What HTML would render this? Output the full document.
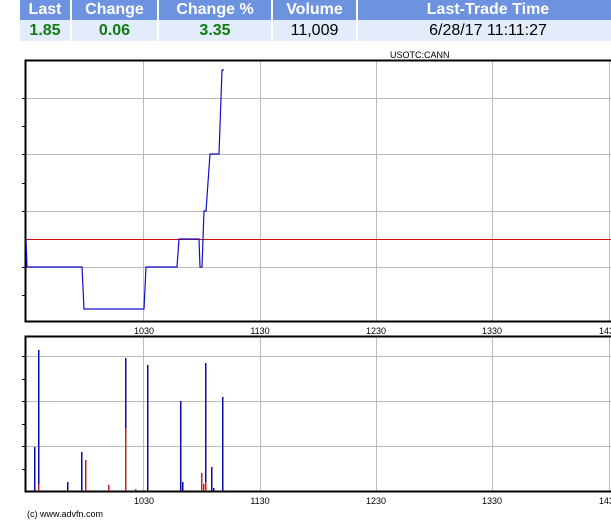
<!DOCTYPE html>
<html><head><style>
body{margin:0;width:611px;height:520px;background:#fff;overflow:hidden;font-family:"Liberation Sans",Arial,sans-serif;position:relative}
table{position:absolute;left:20px;top:0;border-collapse:collapse;width:600px}
th{background:#6c92e0;color:#fff;font-size:16px;height:20px;padding:0;border-right:2px solid #fff;font-weight:bold;line-height:20px}
td{background:#e2ecfb;height:21px;padding:0;text-align:center;font-size:16px;border-right:2px solid #fff;line-height:21px}
.g{color:#117a11;font-weight:bold}
svg{position:absolute;left:0;top:0}
</style></head><body>
<table><tr><th style="width:50px">Last</th><th style="width:85px">Change</th><th style="width:112px">Change %</th><th style="width:83px">Volume</th><th>Last-Trade Time</th></tr>
<tr><td class="g">1.85</td><td class="g">0.06</td><td class="g">3.35</td><td>11,009</td><td>6/28/17 11:11:27</td></tr></table>
<svg width="611" height="520" font-family="Liberation Sans,Arial,sans-serif" font-size="10">
<text x="390" y="58" font-size="9">USOTC:CANN</text>
<g stroke="#bbb" stroke-width="1">
<line x1="143.5" y1="61" x2="143.5" y2="321"/><line x1="260.5" y1="61" x2="260.5" y2="321"/><line x1="376.5" y1="61" x2="376.5" y2="321"/><line x1="492.5" y1="61" x2="492.5" y2="321"/><line x1="609.5" y1="61" x2="609.5" y2="321"/>
<line x1="26" y1="98.5" x2="611" y2="98.5"/><line x1="26" y1="154.5" x2="611" y2="154.5"/><line x1="26" y1="211.5" x2="611" y2="211.5"/><line x1="26" y1="267.5" x2="611" y2="267.5"/>
<line x1="143.5" y1="337" x2="143.5" y2="491"/><line x1="260.5" y1="337" x2="260.5" y2="491"/><line x1="376.5" y1="337" x2="376.5" y2="491"/><line x1="492.5" y1="337" x2="492.5" y2="491"/><line x1="609.5" y1="337" x2="609.5" y2="491"/>
<line x1="26" y1="356.5" x2="611" y2="356.5"/><line x1="26" y1="401.5" x2="611" y2="401.5"/><line x1="26" y1="446.5" x2="611" y2="446.5"/>
</g>
<g stroke="#000" stroke-width="2" fill="none">
<path d="M611 60.5H25.5V321.5H611"/><path d="M611 336.5H25.5V491.5H611"/>
</g>
<g stroke="#000" stroke-width="1">
<line x1="22" y1="98.5" x2="26" y2="98.5"/><line x1="22" y1="154.5" x2="26" y2="154.5"/><line x1="22" y1="211.5" x2="26" y2="211.5"/><line x1="22" y1="267.5" x2="26" y2="267.5"/><line x1="22" y1="126.5" x2="26" y2="126.5"/><line x1="22" y1="183.5" x2="26" y2="183.5"/><line x1="22" y1="295.5" x2="26" y2="295.5"/>
<line x1="22" y1="356.5" x2="26" y2="356.5"/><line x1="22" y1="401.5" x2="26" y2="401.5"/><line x1="22" y1="446.5" x2="26" y2="446.5"/><line x1="22" y1="379.5" x2="26" y2="379.5"/><line x1="22" y1="424.5" x2="26" y2="424.5"/><line x1="22" y1="469.5" x2="26" y2="469.5"/>
</g>
<rect x="26" y="239" width="585" height="1" fill="#d01010"/>
<path d="M26 239L27 267H82L84 309H144L146 267H177L179 239H199L200 267H202L204 211H206L210 154H219L222 70H224" fill="none" stroke="#1010c8" stroke-width="1.2"/>
<g text-anchor="middle" font-size="9"><text x="144" y="334">1030</text><text x="260" y="334">1130</text><text x="376" y="334">1230</text><text x="492" y="334">1330</text><text x="609" y="334">1430</text>
<text x="144" y="504">1030</text><text x="260" y="504">1130</text><text x="376" y="504">1230</text><text x="492" y="504">1330</text><text x="609" y="504">1430</text></g>
<text x="27" y="517" font-size="9">(c) www.advfn.com</text>
<g fill="#0a0aa8">
<rect x="34" y="447" width="1.5" height="44"/><rect x="38" y="350" width="1.5" height="134"/><rect x="67" y="482" width="1.5" height="9"/><rect x="81" y="452" width="1.5" height="39"/><rect x="125" y="358" width="1.5" height="70"/><rect x="147" y="365" width="1.5" height="126"/><rect x="180" y="401" width="1.5" height="90"/><rect x="182" y="482" width="1.5" height="9"/><rect x="205" y="363" width="1.5" height="119"/><rect x="211" y="467" width="1.5" height="24"/><rect x="213" y="488" width="1.5" height="3"/><rect x="222" y="397" width="1.5" height="94"/>
</g>
<g fill="#c82020">
<rect x="38" y="484" width="1.5" height="7"/><rect x="85" y="460" width="1.5" height="31"/><rect x="108" y="485" width="1.5" height="6"/><rect x="125" y="428" width="1.5" height="63"/><rect x="135" y="489" width="1.5" height="2"/><rect x="201" y="473" width="1.5" height="18"/><rect x="203" y="484" width="1.5" height="7"/><rect x="205" y="482" width="1.5" height="9"/>
</g>
</svg>
</body></html>
